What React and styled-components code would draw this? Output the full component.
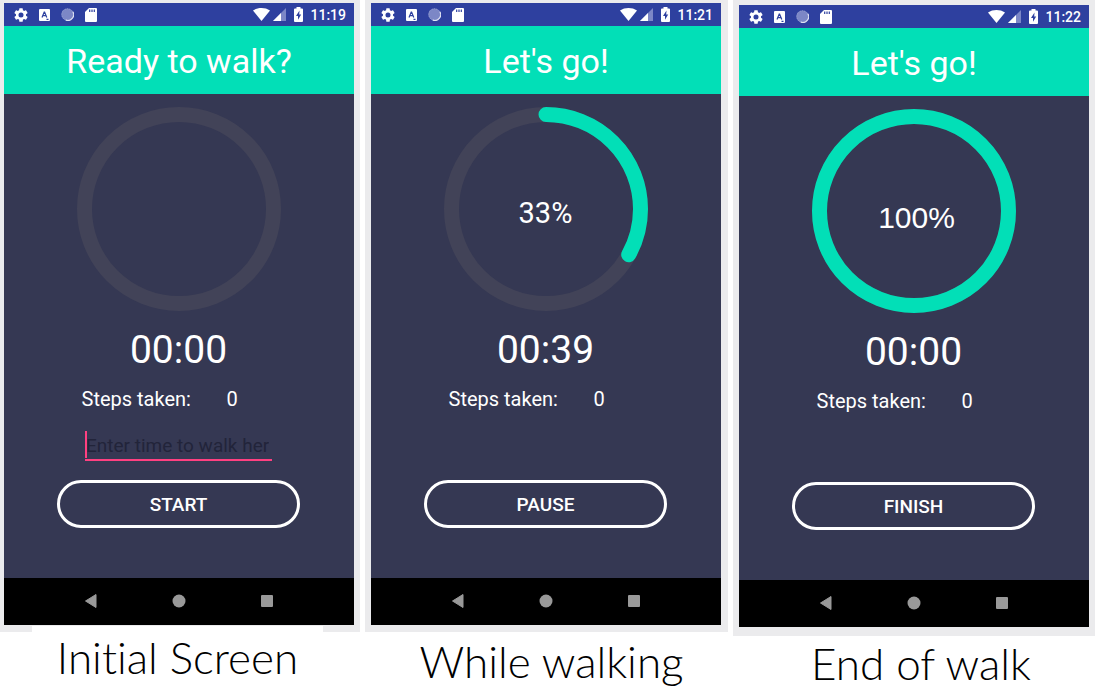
import React from 'react';
import styled, { createGlobalStyle } from 'styled-components';

const GlobalStyle = createGlobalStyle`
  *, *::before, *::after { box-sizing: border-box; }
  body { margin: 0; background: #fff; font-family: Roboto, sans-serif; }
`;

const Board = styled.main`
  display: grid;
  grid-template-columns: 360fr 363fr 362fr;
  align-items: start;
  gap: 5px;
`;

const Figure = styled.figure`
  margin: 0;
  min-width: 0;
`;

const Frame = styled.div`
  background: #ebebed;
  padding: ${(p) => p.$pad};
`;

const Screen = styled.section`
  display: flex;
  flex-direction: column;
  background: #353853;
  color: #fff;
`;

const StatusBar = styled.div`
  display: flex;
  justify-content: space-between;
  align-items: center;
  height: 23px;
  padding: 0 8px 0 10px;
  background: #2e409f;
`;

const StatusGroup = styled.div`
  display: flex;
  align-items: center;
  gap: ${(p) => p.$gap}px;
  svg { display: block; }
`;

const Clock = styled.time`
  font-size: 14px;
  line-height: 16px;
  font-weight: 500;
  margin-left: 4px;
`;

const Title = styled.h1`
  margin: 0;
  padding-top: 2px;
  background: #02dfb7;
  font-size: 34px;
  font-weight: 400;
  line-height: 66px;
  text-align: center;
`;

const Body = styled.div`
  display: flex;
  flex-direction: column;
  align-items: center;
  padding: 13px 17px 50px 16px;
`;

const Ring = styled.div`
  position: relative;
  width: 204px;
  height: 204px;
  svg { display: block; }
`;

const Percent = styled.output`
  position: absolute;
  inset: ${(p) => (p.$full ? '14px 0 0 6px' : '8px 0 0')};
  display: flex;
  align-items: center;
  justify-content: center;
  font-family: ${(p) => (p.$full ? "'Liberation Sans', Arial" : 'Roboto')}, sans-serif;
  font-size: ${(p) => (p.$full ? 30 : 29)}px;
`;

const Timer = styled.div`
  margin-top: 16px;
  font-size: 39px;
  line-height: 46px;
`;

const Steps = styled.dl`
  display: flex;
  justify-content: space-between;
  width: 194px;
  margin: 14px 0 0;
  font-size: 20px;
  line-height: 24px;
  dt, dd { margin: 0; }
  dd { width: 49px; }
`;

const FieldSlot = styled.div`
  height: 49px;
  margin-top: 20px;
`;

const Field = styled.label`
  position: relative;
  display: block;
  width: 187px;
  &::before {
    content: '';
    position: absolute;
    left: 0;
    top: 0;
    width: 2px;
    height: 27px;
    background: #ff4081;
  }
`;

const TimeInput = styled.input`
  display: block;
  width: 100%;
  height: 30px;
  padding: 0 3px 0 1px;
  border: 0;
  border-bottom: 2px solid #ff4081;
  border-radius: 0;
  outline: 0;
  background: transparent;
  color: #fff;
  font: 19px/28px Roboto, sans-serif;
  &::placeholder { color: #22243a; opacity: 1; }
`;

const Action = styled.button`
  width: 243px;
  height: 48px;
  padding: 2px 0 0;
  border: 3px solid #fff;
  border-radius: 24px;
  background: transparent;
  color: #fff;
  font: 500 19px/24px Roboto, sans-serif;
`;

const NavBar = styled.nav`
  display: flex;
  justify-content: center;
  gap: 64px;
  height: 47px;
  padding: 0 1px 1px 0;
  background: #000;
`;

const NavButton = styled.button`
  display: flex;
  align-items: center;
  justify-content: center;
  width: 24px;
  padding: 0;
  border: 0;
  background: transparent;
`;

const Caption = styled.figcaption`
  position: relative;
  margin: ${(p) => p.$margin};
  padding-top: ${(p) => p.$top}px;
  background: #fff;
  color: #000;
  font-family: 'Century Gothic', Lato, sans-serif;
  font-variant-ligatures: none;
  font-weight: 300;
  font-size: 44px;
  line-height: 52px;
  text-align: center;
  white-space: nowrap;
`;

function StatusIcons({ time }) {
  return (
    <StatusBar>
      <StatusGroup $gap={11}>
        <svg width="14" height="14" viewBox="2 2 20 20" fill="#fff">
          <path d="M19.14 12.94c.04-.3.06-.61.06-.94s-.02-.64-.07-.94l2.03-1.58a.49.49 0 0 0 .12-.61l-1.92-3.32a.49.49 0 0 0-.59-.22l-2.39.96c-.5-.38-1.03-.7-1.62-.94l-.36-2.54a.48.48 0 0 0-.48-.41h-3.84a.48.48 0 0 0-.47.41l-.36 2.54c-.59.24-1.13.57-1.62.94l-2.39-.96a.48.48 0 0 0-.59.22L2.74 8.87a.48.48 0 0 0 .12.61l2.03 1.58c-.05.3-.09.63-.09.94s.02.64.07.94l-2.03 1.58a.49.49 0 0 0-.12.61l1.92 3.32c.12.22.37.29.59.22l2.39-.96c.5.38 1.03.7 1.62.94l.36 2.54c.05.24.24.41.48.41h3.84c.24 0 .44-.17.47-.41l.36-2.54c.59-.24 1.13-.56 1.62-.94l2.39.96c.22.08.47 0 .59-.22l1.92-3.32a.48.48 0 0 0-.12-.61zM12 15.6a3.6 3.6 0 1 1 0-7.2 3.6 3.6 0 0 1 0 7.2z" />
        </svg>
        <svg width="11" height="12" viewBox="0 0 11 12">
          <rect width="11" height="12" rx="1" fill="#fff" />
          <path d="M3 8.5 5.2 3h.4l2.200 5.5M3.7 6.7h3.2M7.5 10.3h2" fill="none" stroke="#2e409f" strokeWidth="1.2" />
        </svg>
        <svg width="13" height="13" viewBox="0 0 14 14">
          <circle cx="7" cy="7" r="6.5" fill="#7c87c6" />
          <circle cx="7" cy="7" r="6.2" fill="none" stroke="#a9b1da" strokeWidth=".8" strokeDasharray="1 1" />
          <path d="M12.8 4A6.3 6.3 0 0 1 5 13" fill="none" stroke="#e1e4f3" strokeWidth="1.2" />
        </svg>
        <svg width="12" height="14" viewBox="0 0 12 14">
          <path d="M4 0h7a1 1 0 0 1 1 1v12a1 1 0 0 1-1 1H1a1 1 0 0 1-1-1V4z" fill="#fff" />
          <path d="M4.7 1.5v2.5M7 1.5v2.5M9.3 1.5v2.5" stroke="#2e409f" strokeWidth="1.2" />
        </svg>
      </StatusGroup>
      <StatusGroup $gap={3}>
        <svg width="17" height="13" viewBox="0 0 17 13">
          <path d="M0 2.5C5 -.8 12 -.8 17 2.5L8.5 13z" fill="#fff" />
        </svg>
        <svg width="13" height="13" viewBox="0 0 13 13">
          <path d="M13 0v13H0z" fill="#7c87c6" />
          <path d="M8 5v8H0z" fill="#fff" />
        </svg>
        <svg width="14" height="15" viewBox="-5 0 14 15">
          <path d="M2.5 1.5V0h4v1.5H8a1 1 0 0 1 1 1V14a1 1 0 0 1-1 1H1a1 1 0 0 1-1-1V2.5a1 1 0 0 1 1-1z" fill="#fff" />
          <path d="M5.5 3.5 2 9h2v3.8L7.2 7.5H5.2z" fill="#2e409f" />
        </svg>
        <Clock>{time}</Clock>
      </StatusGroup>
    </StatusBar>
  );
}

function Progress({ value }) {
  const length = 2 * Math.PI * 94.5;
  return (
    <Ring>
      <svg width="204" height="204" viewBox="0 0 204 204" fill="none" strokeWidth="15">
        <circle cx="102" cy="102" r="94.5" stroke="#424358" />
        {value > 0 && (
          <circle
            cx="102"
            cy="102"
            r="94.5"
            stroke="#02dfb7"
            strokeLinecap="round"
            strokeDasharray={`${(length * value) / 100} ${length}`}
            transform="rotate(-90 102 102)"
          />
        )}
      </svg>
      {value > 0 && <Percent $full={value === 100}>{value}%</Percent>}
    </Ring>
  );
}

function Navigation() {
  return (
    <NavBar>
      <NavButton aria-label="Back">
        <svg width="12" height="14" viewBox="0 0 12 14"><path d="M11 .5v13L.5 7z" fill="#999" stroke="#999" strokeLinejoin="round" /></svg>
      </NavButton>
      <NavButton aria-label="Home">
        <svg width="14" height="14" viewBox="0 0 14 14"><circle cx="7" cy="7" r="6.5" fill="#999" /></svg>
      </NavButton>
      <NavButton aria-label="Recent apps">
        <svg width="12" height="12" viewBox="0 0 12 12"><rect width="12" height="12" rx="1" fill="#999" /></svg>
      </NavButton>
    </NavBar>
  );
}

const phones = [
  { clock: '11:19', title: 'Ready to walk?', value: 0, timer: '00:00', field: true, action: 'START', caption: 'Initial Screen', pad: '3px 6px 7px 4px', margin: '-6px 37px 0 32px', top: 5 },
  { clock: '11:21', title: "Let's go!", value: 33, timer: '00:39', action: 'PAUSE', caption: 'While walking', pad: '3px 7px 7px 6px', margin: '0 0 0 10px', top: 3 },
  { clock: '11:22', title: "Let's go!", value: 100, timer: '00:00', action: 'FINISH', caption: 'End of walk', pad: '5px 6px 9px 6px', margin: '0 0 0 14px', top: 1 },
];

export default function App() {
  return (
    <>
      <GlobalStyle />
      <Board>
        {phones.map((p) => (
          <Figure key={p.caption}>
            <Frame $pad={p.pad}>
              <Screen>
                <StatusIcons time={p.clock} />
                <Title>{p.title}</Title>
                <Body>
                  <Progress value={p.value} />
                  <Timer>{p.timer}</Timer>
                  <Steps>
                    <dt>Steps taken:</dt>
                    <dd>0</dd>
                  </Steps>
                  <FieldSlot>
                    {p.field && (
                      <Field>
                        <TimeInput aria-label="Time to walk" placeholder="Enter time to walk here" />
                      </Field>
                    )}
                  </FieldSlot>
                  <Action>{p.action}</Action>
                </Body>
                <Navigation />
              </Screen>
            </Frame>
            <Caption $margin={p.margin} $top={p.top}>{p.caption}</Caption>
          </Figure>
        ))}
      </Board>
    </>
  );
}
